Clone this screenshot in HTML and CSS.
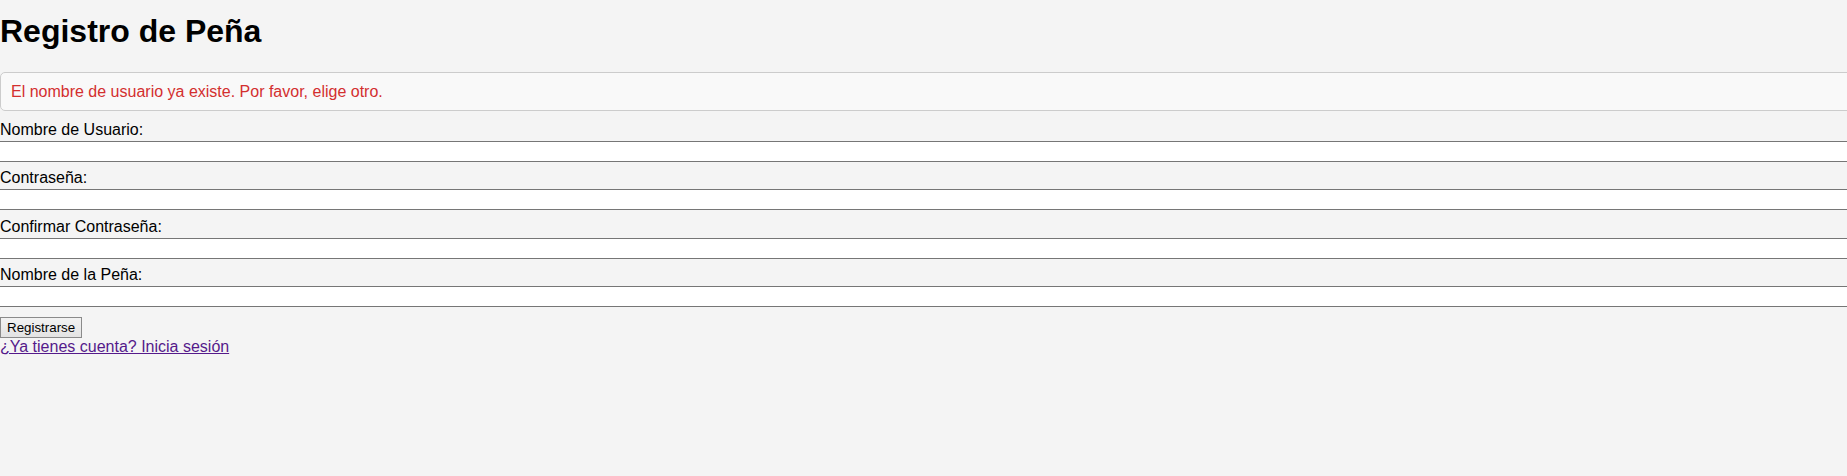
FILE: index.html
```html
<!DOCTYPE html>
<html lang="es">
<head>
<meta charset="utf-8">
<title>Registro de Peña</title>
<link rel="stylesheet" href="styles.css">
</head>
<body>
<h1 class="title">Registro de Peña</h1>
<div class="error">El nombre de usuario ya existe. Por favor, elige otro.</div>
<form class="form">
  <div class="field">
    <label class="label" for="u">Nombre de Usuario:</label>
    <input class="input" id="u" type="text">
  </div>
  <div class="field">
    <label class="label" for="p">Contraseña:</label>
    <input class="input" id="p" type="password">
  </div>
  <div class="field">
    <label class="label" for="c">Confirmar Contraseña:</label>
    <input class="input" id="c" type="password">
  </div>
  <div class="field">
    <label class="label" for="n">Nombre de la Peña:</label>
    <input class="input" id="n" type="text">
  </div>
  <button class="btn" type="button">Registrarse</button>
</form>
<a class="link" href="#">¿Ya tienes cuenta? Inicia sesión</a>
</body>
</html>
```

FILE: styles.css
```css
html {
  overflow: hidden;
}
html, body {
  margin: 0;
  padding: 0;
  background: #f4f4f4;
  font-family: "Liberation Sans", Arial, sans-serif;
  font-size: 16px;
  color: #000;
}
.title {
  font-size: 32px;
  font-weight: bold;
  margin: 13px 0 22px 0;
  line-height: normal;
}
.error {
  width: 100%;
  background: #f9f9f9;
  border: 1px solid #cccccc;
  border-radius: 5px;
  padding: 9.5px 10px;
  color: #d32f2f;
  margin-bottom: 9.5px;
}
.form {
  display: flex;
  flex-direction: column;
  align-items: flex-start;
}
.field {
  display: flex;
  flex-direction: column;
  width: 100%;
  margin-bottom: 7.6px;
}
.label {
  display: block;
  line-height: normal;
  margin-bottom: 2px;
}
.input {
  display: block;
  box-sizing: border-box;
  width: 100%;
  height: 21px;
  margin: 0;
  padding: 1px 2px;
  background: #ffffff;
  border: none;
  border-top: 1px solid #767676;
  border-bottom: 1px solid #767676;
  font-family: "Liberation Sans", Arial, sans-serif;
  font-size: 13.33px;
  outline: none;
}
.btn {
  margin-top: 2.4px;
  height: 21px;
  padding: 1px 6px;
  background: linear-gradient(#f2f2f2, #e3e3e3);
  border: 1px solid #8a8a8a;
  border-radius: 0;
  font-family: "Liberation Sans", Arial, sans-serif;
  font-size: 13.33px;
  color: #000;
}
.link {
  display: inline-block;
  color: #551a8b;
  text-decoration: underline;
  line-height: normal;
}
```
